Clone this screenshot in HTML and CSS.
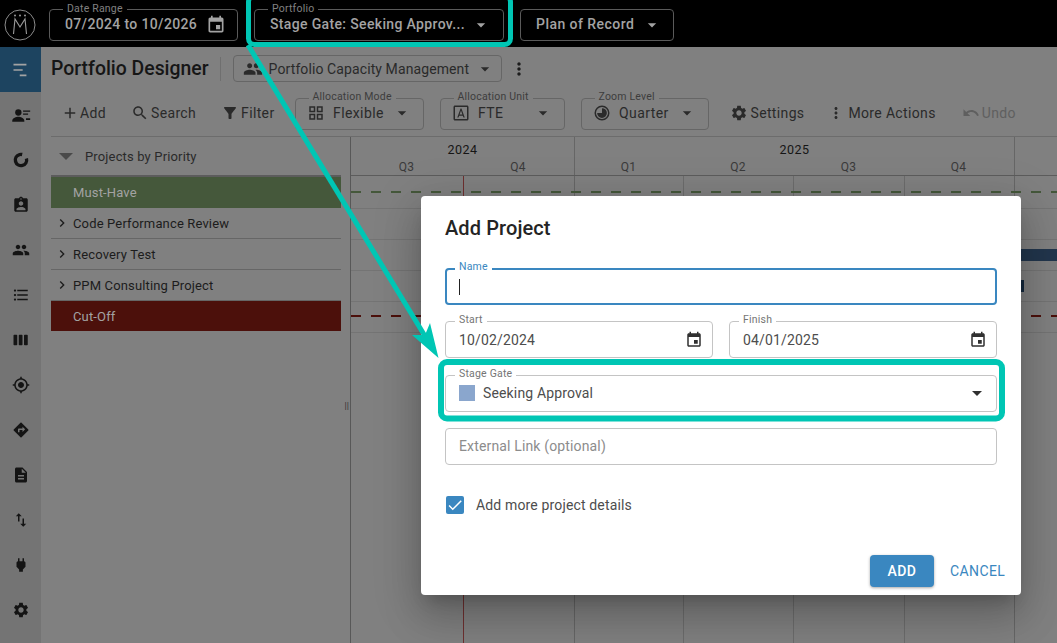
FILE: index.html
```html
<!DOCTYPE html>
<html lang="en">
<head>
<meta charset="utf-8">
<title>Portfolio Designer</title>
<link rel="stylesheet" href="styles.css">
</head>
<body>
<svg class="sprite" xmlns="http://www.w3.org/2000/svg">
  <symbol id="i-event" viewBox="0 0 24 24"><path d="M17 12h-5v5h5v-5zM16 1v2H8V1H6v2H5c-1.11 0-1.99.9-1.99 2L3 19c0 1.1.89 2 2 2h14c1.1 0 2-.9 2-2V5c0-1.1-.9-2-2-2h-1V1h-2zm3 18H5V8h14v11z"/></symbol>
  <symbol id="i-caret" viewBox="0 0 24 24"><path d="M7 10l5 5 5-5z"/></symbol>
  <symbol id="i-people" viewBox="0 0 24 24"><path d="M16 11c1.66 0 2.99-1.34 2.99-3S17.66 5 16 5c-1.66 0-3 1.34-3 3s1.34 3 3 3zm-8 0c1.66 0 2.99-1.34 2.99-3S9.66 5 8 5C6.34 5 5 6.34 5 8s1.34 3 3 3zm0 2c-2.33 0-7 1.17-7 3.5V19h14v-2.5c0-2.33-4.67-3.5-7-3.5zm8 0c-.29 0-.62.02-.97.05 1.16.84 1.97 1.97 1.97 3.45V19h6v-2.5c0-2.33-4.67-3.5-7-3.5z"/></symbol>
  <symbol id="i-search" viewBox="0 0 24 24"><path d="M15.5 14h-.79l-.28-.27C15.41 12.59 16 11.11 16 9.5 16 5.91 13.09 3 9.5 3S3 5.91 3 9.5 5.91 16 9.5 16c1.61 0 3.09-.59 4.23-1.57l.27.28v.79l5 4.99L20.49 19l-4.99-5zm-6 0C7.01 14 5 11.99 5 9.5S7.01 5 9.5 5 14 7.01 14 9.5 11.99 14 9.5 14z"/></symbol>
  <symbol id="i-filter" viewBox="0 0 24 24"><path d="M4.25 5.61C6.27 8.2 10 13 10 13v6c0 .55.45 1 1 1h2c.55 0 1-.45 1-1v-6s3.72-4.8 5.74-7.39c.51-.66.04-1.61-.79-1.61H5.04c-.83 0-1.3.95-.79 1.61z"/></symbol>
  <symbol id="i-plus" viewBox="0 0 24 24"><path d="M19 13h-6v6h-2v-6H5v-2h6V5h2v6h6v2z"/></symbol>
  <symbol id="i-grid" viewBox="0 0 24 24"><path d="M3 3v8h8V3H3zm6 6H5V5h4v4zm-6 4v8h8v-8H3zm6 6H5v-4h4v4zm4-16v8h8V3h-8zm6 6h-4V5h4v4zm-6 4v8h8v-8h-8zm6 6h-4v-4h4v4z"/></symbol>
  <symbol id="i-font" viewBox="0 0 24 24"><path d="M12.58 6h-1.16L7 18h1.7l.9-2.5h4.8l.9 2.5H17L12.58 6zm-2.4 8L12 8.66 13.82 14h-3.64zM20 2H4c-1.1 0-2 .9-2 2v16c0 1.1.9 2 2 2h16c1.1 0 2-.9 2-2V4c0-1.1-.9-2-2-2zm0 18H4V4h16v16z"/></symbol>
  <symbol id="i-zoom" viewBox="0 0 24 24"><path d="M12 2a10 10 0 1 0 0 20 10 10 0 0 0 0-20zm0 18a8 8 0 1 1 0-16 8 8 0 0 1 0 16z"/><path d="M12 12V5.5a6.5 6.5 0 1 1-6.5 6.500z"/></symbol>
  <symbol id="i-gear" viewBox="0 0 24 24"><path d="M19.14 12.94c.04-.3.06-.61.06-.94 0-.32-.02-.64-.07-.94l2.03-1.58c.18-.14.23-.41.12-.61l-1.92-3.32c-.12-.22-.37-.29-.59-.22l-2.39.96c-.5-.38-1.03-.7-1.62-.94l-.36-2.54c-.04-.24-.24-.41-.48-.41h-3.84c-.24 0-.43.17-.47.41l-.36 2.54c-.59.24-1.13.57-1.62.94l-2.39-.96c-.22-.08-.47 0-.59.22L2.74 8.87c-.12.21-.08.47.12.61l2.03 1.58c-.05.3-.09.63-.09.94s.02.64.07.94l-2.03 1.58c-.18.14-.23.41-.12.61l1.92 3.32c.12.22.37.29.59.22l2.39-.96c.5.38 1.03.7 1.62.94l.36 2.54c.05.24.24.41.48.41h3.84c.24 0 .44-.17.47-.41l.36-2.54c.59-.24 1.13-.56 1.62-.94l2.39.96c.22.08.47 0 .59-.22l1.92-3.32c.12-.22.07-.47-.12-.61l-2.01-1.58zM12 15.6c-1.98 0-3.6-1.62-3.6-3.6s1.62-3.6 3.6-3.6 3.6 1.62 3.6 3.6-1.62 3.6-3.6 3.6z"/></symbol>
  <symbol id="i-more" viewBox="0 0 24 24"><path d="M12 8c1.1 0 2-.9 2-2s-.9-2-2-2-2 .9-2 2 .9 2 2 2zm0 2c-1.1 0-2 .9-2 2s.9 2 2 2 2-.9 2-2-.9-2-2-2zm0 6c-1.1 0-2 .9-2 2s.9 2 2 2 2-.9 2-2-.9-2-2-2z"/></symbol>
  <symbol id="i-undo" viewBox="0 0 24 24"><path d="M12.5 8c-2.65 0-5.05.99-6.9 2.6L2 7v9h9l-3.62-3.62c1.39-1.16 3.16-1.88 5.12-1.88 3.54 0 6.55 2.31 7.6 5.5l2.37-.78C21.08 11.03 17.15 8 12.5 8z"/></symbol>
  <symbol id="i-chevron" viewBox="0 0 24 24"><path d="M10 6L8.59 7.41 13.17 12l-4.58 4.59L10 18l6-6z"/></symbol>
  <symbol id="i-bars" viewBox="0 0 24 24"><path d="M3 4.5h15.5v2H3zM3 11h11v2H3zM10.5 17.5h8v2h-8z"/></symbol>
  <symbol id="i-personlist" viewBox="0 0 24 24"><circle cx="8.8" cy="9" r="3.8"/><path d="M1.500 19c0-3.200 5-4.800 7.300-4.800s7.200 1.600 7.200 4.800v1H1.500zM14.500 6.500h8.500v1.500h-8.500zM14.500 10.200h6v1.500h-6zM18 16h5v2h-5z"/></symbol>
  <symbol id="i-donut" viewBox="0 0 24 24"><circle cx="12" cy="12" r="7.500" fill="none" stroke="currentColor" stroke-width="4.500" stroke-dasharray="38 9.100" transform="rotate(-15 12 12)"/></symbol>
  <symbol id="i-badge" viewBox="0 0 24 24"><path d="M19 3h-4.180C14.400 1.840 13.300 1 12 1c-1.300 0-2.400.84-2.820 2H5c-1.100 0-2 .9-2 2v14c0 1.100.9 2 2 2h14c1.100 0 2-.9 2-2V5c0-1.100-.9-2-2-2zm-7 0c.55 0 1 .45 1 1s-.45 1-1 1-1-.45-1-1 .45-1 1-1zm0 4c1.660 0 3 1.340 3 3s-1.340 3-3 3-3-1.340-3-3 1.340-3 3-3zm6 12H6v-1.400c0-2 4-3.100 6-3.100s6 1.100 6 3.100V19z"/></symbol>
  <symbol id="i-list" viewBox="0 0 24 24"><path d="M4 10.500c-.83 0-1.500.67-1.500 1.500s.67 1.500 1.500 1.500 1.500-.67 1.500-1.500-.67-1.500-1.500-1.500zm0-6c-.83 0-1.500.67-1.500 1.500S3.170 7.500 4 7.500 5.500 6.830 5.500 6 4.830 4.500 4 4.500zm0 12c-.83 0-1.500.68-1.500 1.500s.68 1.500 1.500 1.500 1.500-.68 1.500-1.500-.67-1.500-1.500-1.500zM7 19h14v-2H7v2zm0-6h14v-2H7v2zm0-8v2h14V5H7z"/></symbol>
  <symbol id="i-week" viewBox="0 0 24 24"><path d="M6 5H3c-.55 0-1 .45-1 1v12c0 .55.45 1 1 1h3c.55 0 1-.45 1-1V6c0-.55-.45-1-1-1zm14 0h-3c-.55 0-1 .45-1 1v12c0 .55.45 1 1 1h3c.55 0 1-.45 1-1V6c0-.55-.45-1-1-1zm-7 0h-3c-.55 0-1 .45-1 1v12c0 .55.45 1 1 1h3c.55 0 1-.45 1-1V6c0-.55-.45-1-1-1z"/></symbol>
  <symbol id="i-gps" viewBox="0 0 24 24"><path d="M12 8c-2.210 0-4 1.790-4 4s1.790 4 4 4 4-1.790 4-4-1.790-4-4-4zm8.940 3c-.46-4.170-3.770-7.480-7.940-7.940V1h-2v2.060C6.830 3.520 3.520 6.830 3.060 11H1v2h2.060c.46 4.170 3.770 7.480 7.940 7.940V23h2v-2.060c4.170-.46 7.480-3.770 7.940-7.940H23v-2h-2.060zM12 19c-3.870 0-7-3.130-7-7s3.130-7 7-7 7 3.130 7 7-3.130 7-7 7z"/></symbol>
  <symbol id="i-directions" viewBox="0 0 24 24"><path d="M21.710 11.290l-9-9c-.39-.39-1.020-.39-1.410 0l-9 9c-.39.39-.39 1.020 0 1.410l9 9c.39.39 1.020.39 1.410 0l9-9c.39-.38.39-1.010 0-1.410zM14 14.500V12h-4v3H8v-4c0-.55.45-1 1-1h5V7.500l3.500 3.500-3.500 3.500z"/></symbol>
  <symbol id="i-doc" viewBox="0 0 24 24"><path d="M14 2H6c-1.100 0-1.990.9-1.990 2L4 20c0 1.100.89 2 1.990 2H18c1.100 0 2-.9 2-2V8l-6-6zm2 16H8v-2h8v2zm0-4H8v-2h8v2zm-3-5V3.500L18.500 9H13z"/></symbol>
  <symbol id="i-swap" viewBox="0 0 24 24"><path d="M9 3L5 6.990h3V14h2V6.990h3L9 3zm7 14.010V10h-2v7.010h-3L15 21l4-3.990h-3z"/></symbol>
  <symbol id="i-plug" viewBox="0 0 24 24"><path d="M16.010 7L16 3h-2v4h-4V3H8v4h-.01C7 6.990 6 7.990 6 8.990v5.490L9.500 18v3h5v-3l3.500-3.510v-5.500c0-1-1-2-1.990-1.990z"/></symbol>
</svg>

<div class="app">
  <header class="topbar">
    <svg class="logo" viewBox="0 0 32 32" aria-hidden="true">
      <circle cx="16" cy="16" r="15" fill="none" stroke="#8c8c8c" stroke-width="1"/>
      <path d="M9.500 25L11 10l5 8 5-8 1.500 15" fill="none" stroke="#9a9a9a" stroke-width="1.100"/>
      <circle cx="11" cy="6.500" r="1" fill="#9a9a9a"/><circle cx="16" cy="6.500" r="1" fill="#9a9a9a"/><circle cx="21" cy="6.500" r="1" fill="#9a9a9a"/>
    </svg>
    <div class="tfield tf-date">
      <span class="tlabel">Date Range</span>
      <span class="tvalue">07/2024 to 10/2026</span>
      <svg class="ic ic20 push"><use href="#i-event"/></svg>
    </div>
    <div class="tfield tf-portfolio">
      <span class="tlabel">Portfolio</span>
      <span class="tvalue">Stage Gate: Seeking Approv...</span>
      <svg class="ic ic20 push"><use href="#i-caret"/></svg>
    </div>
    <div class="tfield tf-plan">
      <span class="tvalue">Plan of Record</span>
      <svg class="ic ic20 push"><use href="#i-caret"/></svg>
    </div>
  </header>

  <div class="main">
    <nav class="sidebar">
      <div class="navitem active"><svg class="ic ic20"><use href="#i-bars"/></svg></div>
      <div class="navitem"><svg class="ic ic20"><use href="#i-personlist"/></svg></div>
      <div class="navitem"><svg class="ic ic18"><use href="#i-donut"/></svg></div>
      <div class="navitem"><svg class="ic ic18"><use href="#i-badge"/></svg></div>
      <div class="navitem"><svg class="ic ic18"><use href="#i-people"/></svg></div>
      <div class="navitem"><svg class="ic ic18"><use href="#i-list"/></svg></div>
      <div class="navitem"><svg class="ic ic18"><use href="#i-week"/></svg></div>
      <div class="navitem"><svg class="ic ic18"><use href="#i-gps"/></svg></div>
      <div class="navitem"><svg class="ic ic18"><use href="#i-directions"/></svg></div>
      <div class="navitem"><svg class="ic ic18"><use href="#i-doc"/></svg></div>
      <div class="navitem"><svg class="ic ic18"><use href="#i-swap"/></svg></div>
      <div class="navitem"><svg class="ic ic18"><use href="#i-plug"/></svg></div>
      <div class="navitem"><svg class="ic ic18"><use href="#i-gear"/></svg></div>
    </nav>

    <section class="content">
      <div class="titlebar">
        <h1 class="title">Portfolio Designer</h1>
        <span class="divider"></span>
        <div class="viewbtn">
          <svg class="ic ic20"><use href="#i-people"/></svg>
          <span>Portfolio Capacity Management</span>
          <svg class="ic ic20 push"><use href="#i-caret"/></svg>
        </div>
        <svg class="ic ic20 kebab"><use href="#i-more"/></svg>
      </div>

      <div class="toolbar">
        <div class="tool tool-add"><svg class="ic ic18"><use href="#i-plus"/></svg><span>Add</span></div>
        <div class="tool"><svg class="ic ic18"><use href="#i-search"/></svg><span>Search</span></div>
        <div class="tool"><svg class="ic ic18"><use href="#i-filter"/></svg><span>Filter</span></div>
        <div class="sfield sf-mode">
          <span class="slabel">Allocation Mode</span>
          <svg class="ic ic18"><use href="#i-grid"/></svg><span>Flexible</span>
          <svg class="ic ic20 push"><use href="#i-caret"/></svg>
        </div>
        <div class="sfield sf-unit">
          <span class="slabel">Allocation Unit</span>
          <svg class="ic ic18"><use href="#i-font"/></svg><span>FTE</span>
          <svg class="ic ic20 push"><use href="#i-caret"/></svg>
        </div>
        <div class="sfield sf-zoom">
          <span class="slabel">Zoom Level</span>
          <svg class="ic ic18"><use href="#i-zoom"/></svg><span>Quarter</span>
          <svg class="ic ic20 push"><use href="#i-caret"/></svg>
        </div>
        <div class="tool tool-settings"><svg class="ic ic18"><use href="#i-gear"/></svg><span>Settings</span></div>
        <div class="tool tool-more"><svg class="ic ic18"><use href="#i-more"/></svg><span>More Actions</span></div>
        <div class="tool disabled"><svg class="ic ic18"><use href="#i-undo"/></svg><span>Undo</span></div>
      </div>

      <div class="designer">
        <div class="tree">
          <div class="treehead"><span class="tri"></span><span>Projects by Priority</span></div>
          <div class="band band-green">Must-Have</div>
          <div class="trow"><svg class="ic ic16"><use href="#i-chevron"/></svg><span>Code Performance Review</span></div>
          <div class="trow"><svg class="ic ic16"><use href="#i-chevron"/></svg><span>Recovery Test</span></div>
          <div class="trow"><svg class="ic ic16"><use href="#i-chevron"/></svg><span>PPM Consulting Project</span></div>
          <div class="band band-red">Cut-Off</div>
          <span class="grip">||</span>
        </div>
        <div class="timeline">
          <div class="thead">
            <div class="year y1">2024</div>
            <div class="year y2">2025</div>
            <div class="year y3"></div>
            <div class="q">Q3</div><div class="q q-end">Q4</div><div class="q">Q1</div><div class="q">Q2</div><div class="q">Q3</div><div class="q q-end">Q4</div><div class="q"></div>
          </div>
          <div class="tbody">
            <div class="gridcols">
              <span class="col c1"></span><span class="col c2"></span><span class="col c3"></span><span class="col c4"></span><span class="col c5"></span><span class="col c6"></span>
            </div>
            <div class="lrow first"><span class="dash dash-green"></span></div>
            <div class="lrow"></div>
            <div class="lrow"><span class="bar bar-long"></span></div>
            <div class="lrow"><span class="bar bar-short"></span></div>
            <div class="lrow"><span class="dash dash-red"></span></div>
          </div>
        </div>
      </div>
    </section>
  </div>

  <div class="modal">
    <h2 class="mtitle">Add Project</h2>
    <div class="form">
      <div class="field focused">
        <span class="flabel">Name</span>
        <span class="cursor"></span>
      </div>
      <div class="frow">
        <div class="field">
          <span class="flabel">Start</span>
          <span>10/02/2024</span>
          <svg class="ic ic18 push dark"><use href="#i-event"/></svg>
        </div>
        <div class="field">
          <span class="flabel">Finish</span>
          <span>04/01/2025</span>
          <svg class="ic ic18 push dark"><use href="#i-event"/></svg>
        </div>
      </div>
      <div class="field">
        <span class="flabel">Stage Gate</span>
        <span class="swatch"></span>
        <span>Seeking Approval</span>
        <svg class="ic ic24 push dark"><use href="#i-caret"/></svg>
      </div>
      <div class="field placeholder">External Link (optional)</div>
    </div>
    <label class="check">
      <span class="box"><svg viewBox="0 0 24 24"><path d="M9 16.200L4.800 12l-1.400 1.400L9 19 21 7l-1.400-1.400z"/></svg></span>
      <span>Add more project details</span>
    </label>
    <div class="actions">
      <button class="btn-add" type="button">ADD</button>
      <button class="btn-cancel" type="button">CANCEL</button>
    </div>
  </div>

  <svg class="annot" viewBox="0 0 1057 643" aria-hidden="true">
    <rect class="hl" x="248.500" y="-4" width="262" height="48.500" rx="6"/>
    <rect class="hl hl-wide" x="441" y="362" width="561" height="56.500" rx="6"/>
    <path class="shaft" d="M248 45L431 346"/>
    <polygon class="head" points="438.500,358 430,323 425,335 412,335"/>
  </svg>
</div>
</body>
</html>
```

FILE: styles.css
```css
* { box-sizing: border-box; }
html, body { margin: 0; height: 100%; }
body {
  font-family: Roboto, "Liberation Sans", sans-serif;
  font-size: 14px;
  letter-spacing: .25px;
  color: #181818;
  background: #808080;
  overflow: hidden;
}
.sprite { display: none; }
.app { position: relative; width: 1057px; height: 643px; display: flex; flex-direction: column; overflow: hidden; }

.ic { fill: currentColor; flex: none; display: block; }
.ic16 { width: 16px; height: 16px; }
.ic18 { width: 18px; height: 18px; }
.ic20 { width: 20px; height: 20px; }
.ic24 { width: 24px; height: 24px; }
.push { margin-left: auto; }
.dark { color: #303030; }

/* top bar */
.topbar { height: 47px; flex: none; background: #000; display: flex; align-items: center; padding: 2px 0 0 4px; color: #a3a3a3; }
.logo { width: 32px; height: 32px; margin-right: 13px; flex: none; }
.tfield { position: relative; height: 32px; border: 1px solid #5a5a5a; border-radius: 4px; display: flex; align-items: center; margin-right: 16px; font-weight: 500; letter-spacing: .35px; }
.tvalue { padding-bottom: 2px; }
.tf-date { width: 189px; padding: 0 11px 0 15px; }
.tf-portfolio { width: 250px; padding: 0 12px 0 15px; }
.tf-plan { width: 154px; padding: 0 11px 0 15px; letter-spacing: .45px; }
.tlabel { position: absolute; left: 13px; top: -7px; padding: 0 4px; font-size: 10.500px; line-height: 12px; font-weight: 400; letter-spacing: .2px; color: #808080; background: #000; }

.main { flex: 1; display: flex; min-height: 0; }
.sidebar { width: 41px; flex: none; background: #747474; color: #141414; display: flex; flex-direction: column; }
.navitem { height: 45px; flex: none; display: flex; align-items: center; justify-content: center; }
.navitem.active { background: #1d4460; color: #a3a3a3; }

.content { flex: 1; min-width: 0; padding-left: 10px; display: flex; flex-direction: column; }
.titlebar { height: 50px; flex: none; display: flex; align-items: center; padding-bottom: 7px; }
.title { margin: 0; font-size: 19.400px; font-weight: 500; letter-spacing: 0; line-height: 24px; color: #161616; }
.divider { width: 1px; height: 24px; background: #6f6f6f; margin: 0 12px 0 11px; }
.viewbtn { width: 269px; height: 27px; border: 1px solid #666; border-radius: 4px; display: flex; align-items: center; gap: 6px; padding: 0 7px 0 9px; color: #2a2a2a; letter-spacing: .1px; white-space: nowrap; }
.kebab { margin-left: 7px; color: #1c1c1c; }

.toolbar { height: 40px; flex: none; display: flex; align-items: flex-start; gap: 5px; padding-top: 1px; border-bottom: 1px solid #6c6c6c; color: #2a2a2a; }
.tool { height: 32px; padding: 0 10px 2px; display: flex; align-items: center; gap: 2px; letter-spacing: .35px; }
.tool-add { gap: 1px; }
.tool-settings { gap: 3px; }
.tool.disabled { color: #5f5f5f; padding-left: 11px; }
.tool-more { padding-left: 8px; gap: 3px; }
.sfield { position: relative; height: 32px; border: 1px solid #666; border-radius: 4px; display: flex; align-items: center; gap: 8.500px; margin: 0 6px 0 5px; padding: 0 11px 2px 11px; letter-spacing: .4px; }
.sf-mode { width: 129px; }
.sf-unit { width: 125px; }
.sf-zoom { width: 128px; }
.slabel { position: absolute; left: 13px; top: -8px; padding: 0 4px; font-size: 10.500px; line-height: 12px; letter-spacing: .2px; color: #3d3d3d; background: #808080; }

.designer { flex: 1; display: flex; min-height: 0; }
.tree { position: relative; width: 300px; flex: none; padding-right: 9px; border-right: 1px solid #585858; }
.treehead { height: 40px; display: flex; align-items: center; gap: 12px; padding: 1px 0 0 8px; border-bottom: 2px solid #5c5c5c; color: #2a2a2a; font-size: 13px; letter-spacing: .15px; }
.tri { width: 0; height: 0; border-left: 7px solid transparent; border-right: 7px solid transparent; border-top: 7px solid #4a4a4a; }
.band { height: 31px; display: flex; align-items: center; padding-left: 22px; font-size: 13px; letter-spacing: .15px; color: #a3a3a3; }
.band-green { background: #45583b; }
.band-red { background: #4c100b; height: 30px; }
.trow { height: 31px; display: flex; align-items: center; gap: 3px; padding-left: 3px; border-bottom: 1px solid #666; font-size: 13px; letter-spacing: .15px; color: #1c1c1c; }
.grip { position: absolute; right: 1px; top: 264px; font-size: 9px; line-height: 10px; letter-spacing: 0; color: #333; }

.timeline { flex: 1; min-width: 0; display: flex; flex-direction: column; }
.thead { height: 39px; flex: none; display: grid; grid-template-columns: 113px 111px 109px 110px 111px 110px 1fr; grid-template-rows: 21px 17px; border-bottom: 1px solid #5c5c5c; }
.year { font-size: 12.500px; text-align: center; color: #151515; line-height: 26px; letter-spacing: .5px; }
.y1 { grid-column: 1 / 3; }
.y2 { grid-column: 3 / 7; }
.y1, .y2 { border-right: 1px solid #666; }
.q { font-size: 12px; text-align: center; color: #3a3a3a; line-height: 19px; letter-spacing: .2px; padding-right: 2px; }
.q-end { border-right: 1px solid #666; }
.tbody { position: relative; flex: 1; }
.gridcols { position: absolute; inset: 0; display: flex; }
.col { height: 100%; border-right: 1px solid #6c6c6c; }
.c1 { width: 113px; border-right-color: #6e3030; }
.c2 { width: 111px; border-right-color: #666; }
.c3 { width: 109px; }
.c4 { width: 110px; }
.c5 { width: 111px; }
.c6 { width: 110px; border-right-color: #666; }
.lrow { position: relative; height: 31px; border-bottom: 1px solid #747474; }
.lrow.first { height: 33px; }
.dash { position: absolute; left: 0; right: 0; top: 15px; height: 2px; }
.dash-green { background: repeating-linear-gradient(90deg, #45583b 0 10px, transparent 10px 20px); }
.dash-red { top: 13px; background: repeating-linear-gradient(90deg, #4c100b 0 10px, transparent 10px 20px); }
.bar { position: absolute; }
.bar-long { left: 600px; right: 0; top: 9px; height: 12px; background: #22364d; }
.bar-short { left: 600px; width: 73px; top: 9px; height: 12px; background: #14273d; }

/* dialog */
.modal { position: absolute; left: 421px; top: 196px; width: 600px; height: 399px; background: #fff; border-radius: 4px; padding: 20px 0 8px; display: flex; flex-direction: column; color: #4d4d4d;
  box-shadow: 0 11px 15px -7px rgba(0,0,0,.2), 0 24px 38px 3px rgba(0,0,0,.14), 0 9px 46px 8px rgba(0,0,0,.12); }
.mtitle { margin: 0 24px; font-size: 20px; line-height: 24px; font-weight: 500; letter-spacing: .1px; color: #242424; }
.form { margin: 28px 24px 0; display: flex; flex-direction: column; gap: 16.330px; }
.frow { display: flex; gap: 16px; }
.frow .field { flex: 1; }
.field { position: relative; height: 37px; border: 1px solid #c4c4c4; border-radius: 4px; display: flex; align-items: center; padding: 0 9px 0 13px; letter-spacing: .15px; }
.field.focused { border: 2px solid #3a87c0; padding-left: 12px; }
.flabel { position: absolute; left: 9px; top: -8px; padding: 0 4px; font-size: 10.500px; line-height: 12px; letter-spacing: .2px; color: #757575; background: #fff; }
.focused .flabel { left: 8px; top: -9px; color: #3a87c0; }
.cursor { width: 1px; height: 16px; background: #222; }
.swatch { width: 16px; height: 16px; background: #8aa6cd; margin-right: 8px; }
.field .ic24 { margin-right: -2px; }
.placeholder { color: #8c8c8c; }
.check { display: flex; align-items: center; gap: 12px; margin: 31px 24px 0 25px; letter-spacing: .15px; }
.box { width: 18px; height: 18px; border-radius: 2px; background: #3a87c0; display: block; }
.box svg { display: block; width: 18px; height: 18px; fill: #fff; }
.actions { margin-top: auto; display: flex; align-items: center; justify-content: flex-end; padding-right: 17px; }
button { font: inherit; border: 0; cursor: pointer; }
.btn-add { width: 64px; height: 32px; border-radius: 4px; background: #3a87c0; color: #fff; font-weight: 500; letter-spacing: .4px; box-shadow: 0 1px 3px rgba(0,0,0,.35); margin-right: 16px; padding: 0; }
.btn-cancel { width: 54px; background: none; color: #3a87c0; padding: 0; letter-spacing: .4px; text-align: left; white-space: nowrap; }

/* tutorial annotation drawn over the whole screenshot */
.annot { position: absolute; inset: 0; width: 1057px; height: 643px; pointer-events: none; }
.hl { fill: none; stroke: #00c6b4; stroke-width: 5; }
.hl-wide { stroke-width: 6; }
.shaft { fill: none; stroke: #00c6b4; stroke-width: 5; }
.head { fill: #00c6b4; }
```
